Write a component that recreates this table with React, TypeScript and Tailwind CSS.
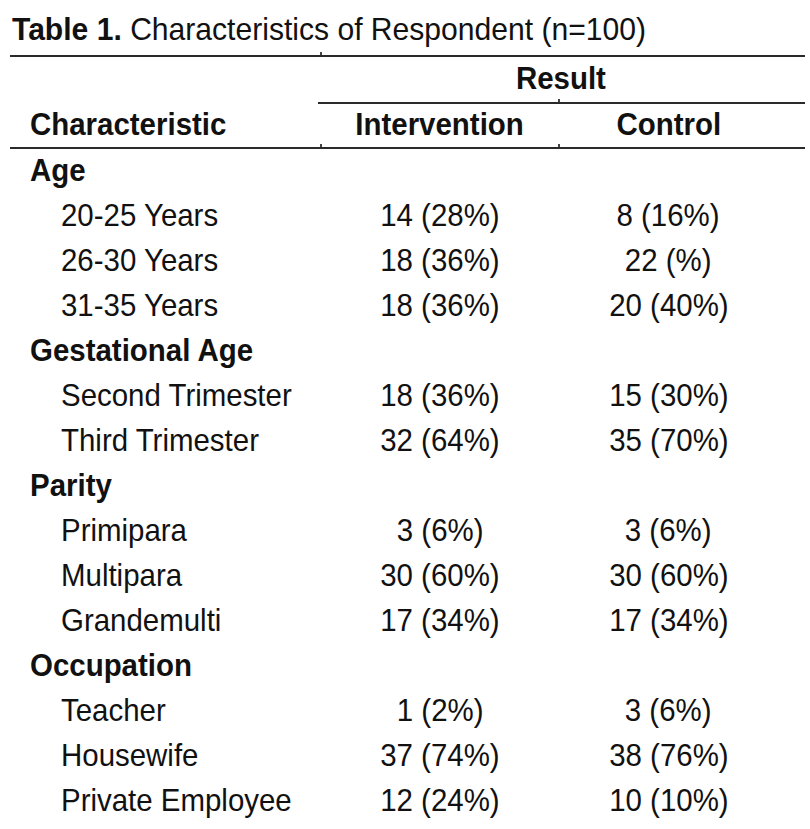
import React from "react";

type Row = { label: string; a?: string; b?: string; group?: boolean };

const rows: Row[] = [
  { label: "Age", group: true },
  { label: "20-25 Years", a: "14 (28%)", b: "8 (16%)" },
  { label: "26-30 Years", a: "18 (36%)", b: "22 (%)" },
  { label: "31-35 Years", a: "18 (36%)", b: "20 (40%)" },
  { label: "Gestational Age", group: true },
  { label: "Second Trimester", a: "18 (36%)", b: "15 (30%)" },
  { label: "Third Trimester", a: "32 (64%)", b: "35 (70%)" },
  { label: "Parity", group: true },
  { label: "Primipara", a: "3 (6%)", b: "3 (6%)" },
  { label: "Multipara", a: "30 (60%)", b: "30 (60%)" },
  { label: "Grandemulti", a: "17 (34%)", b: "17 (34%)" },
  { label: "Occupation", group: true },
  { label: "Teacher", a: "1 (2%)", b: "3 (6%)" },
  { label: "Housewife", a: "37 (74%)", b: "38 (76%)" },
  { label: "Private Employee", a: "12 (24%)", b: "10 (10%)" },
];

function L({ children }: { children: React.ReactNode }) {
  return <span className="inline-block origin-left scale-x-[0.92]">{children}</span>;
}
function C({ children }: { children: React.ReactNode }) {
  return <span className="inline-block origin-center scale-x-[0.92]">{children}</span>;
}

function Rule() {
  return (
    <div className="relative h-[2px] bg-[#2a2a2a]">
      <span className="absolute left-[310px] top-[-3px] h-[3px] w-[2px] bg-[#444]" />
      <span className="absolute left-[548px] top-[-3px] h-[3px] w-[2px] bg-[#444]" />
    </div>
  );
}

export default function App() {
  return (
    <div
      className="w-[810px] h-[829px] bg-white text-[#111] overflow-hidden"
      style={{ fontFamily: '"Liberation Sans", Arial, sans-serif' }}
    >
      <div className="pl-[12px] pt-[10px] h-[55px] text-[32px] leading-[38px] whitespace-nowrap">
        <span className="inline-block origin-left scale-x-[0.94]">
          <span className="font-bold">Table 1.</span> Characteristics of Respondent (n=100)
        </span>
      </div>
      <div className="ml-[10px] w-[795px]">
        <div className="relative h-[2px] bg-[#2a2a2a]">
          <span className="absolute left-[310px] top-[-3px] h-[3px] w-[2px] bg-[#444]" />
        </div>
        <div className="grid grid-cols-[308px_487px] h-[45px] items-center pb-[3px]">
          <div />
          <div className="text-center font-bold text-[32px] leading-none pr-[2px] whitespace-nowrap">
            <C>Result</C>
          </div>
        </div>
        <div className="grid grid-cols-[308px_487px]">
          <div />
          <div className="relative h-[2px] bg-[#2a2a2a]">
            <span className="absolute left-[240px] top-[-3px] h-[3px] w-[2px] bg-[#444]" />
          </div>
        </div>
        <div className="grid grid-cols-[308px_244px_243px] h-[43px] items-center pb-[3px] font-bold text-[32px] leading-none whitespace-nowrap">
          <div className="pl-[20px]">
            <L>Characteristic</L>
          </div>
          <div className="text-center">
            <C>Intervention</C>
          </div>
          <div className="text-center pr-[30px]">
            <C>Control</C>
          </div>
        </div>
        <Rule />
        {rows.map((r) => (
          <div
            key={r.label}
            className="grid grid-cols-[308px_244px_243px] h-[45px] items-center pb-[3px] text-[32px] leading-none whitespace-nowrap"
          >
            {r.group ? (
              <div className="pl-[20px] font-bold">
                <L>{r.label}</L>
              </div>
            ) : (
              <div className="pl-[51px]">
                <L>{r.label}</L>
              </div>
            )}
            <div className="text-center">{r.a ? <C>{r.a}</C> : null}</div>
            <div className="text-center pr-[30px]">{r.b ? <C>{r.b}</C> : null}</div>
          </div>
        ))}
      </div>
    </div>
  );
}
